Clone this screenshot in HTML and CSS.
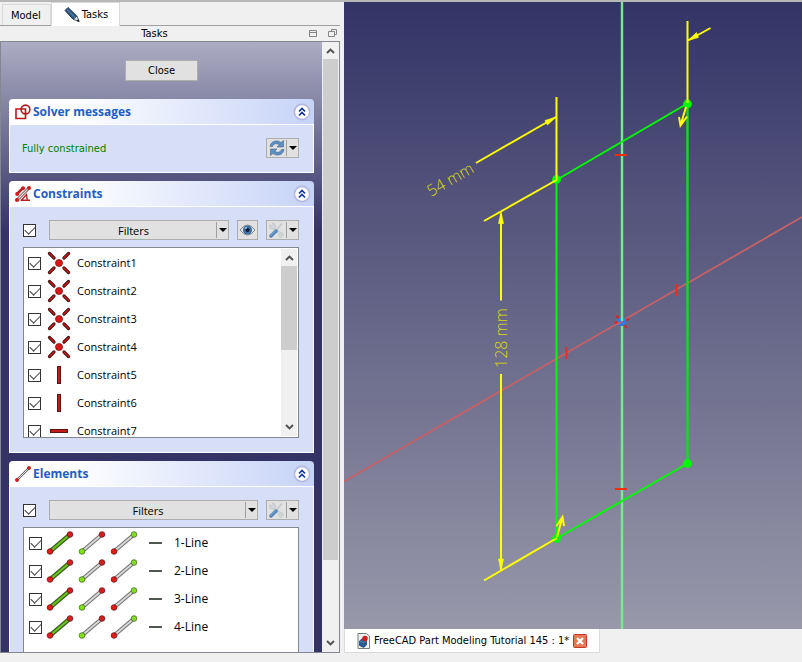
FILE: index.html
```html
<!DOCTYPE html>
<html lang="en">
<head>
<meta charset="utf-8">
<title>FreeCAD</title>
<link rel="stylesheet" href="styles.css">
</head>
<body>
<svg class="defs" aria-hidden="true">
  <defs>
    <symbol id="chevrons" viewBox="0 0 18 18">
      <circle cx="9" cy="9" r="7.6" fill="#fff" stroke="#b3b8dc" stroke-width="1.6"/>
      <path d="M6 8.5 9 5.500l3 3M6 12.500l3-3 3 3" fill="none" stroke="#0b36a8" stroke-width="1.700"/>
    </symbol>
    <symbol id="coincident" viewBox="0 0 24 24">
      <g stroke="#3a1010" stroke-width="3.200" stroke-linecap="round"><path d="M2.500 2.500 7 7M21.500 2.500 17 7M2.500 21.500 7 17M21.500 21.500 17 17"/></g>
      <g stroke="#c41a1a" stroke-width="1.600" stroke-linecap="round"><path d="M2.500 2.500 7 7M21.500 2.500 17 7M2.500 21.500 7 17M21.500 21.500 17 17"/></g>
      <circle cx="12" cy="12" r="3.500" fill="#d81818" stroke="#8d1010" stroke-width=".8"/>
    </symbol>
    <symbol id="vertical" viewBox="0 0 24 24">
      <rect x="10.500" y="3.500" width="3" height="17" fill="#c41a1a" stroke="#5b1414"/>
    </symbol>
    <symbol id="horizontal" viewBox="0 0 24 24">
      <rect x="3.500" y="10.500" width="17" height="3" fill="#c41a1a" stroke="#5b1414"/>
    </symbol>
    <symbol id="edge-line" viewBox="0 0 28 24">
      <path d="M4 20.500 24 3.500" stroke="#3c5a1c" stroke-width="4.400"/>
      <path d="M4 20.500 24 3.500" stroke="#69c41c" stroke-width="2.200"/>
      <circle cx="4" cy="20.500" r="2.800" fill="#e01b1b" stroke="#701515" stroke-width=".8"/>
      <circle cx="24" cy="3.500" r="2.800" fill="#e01b1b" stroke="#701515" stroke-width=".8"/>
    </symbol>
    <symbol id="start-line" viewBox="0 0 28 24">
      <path d="M4 20.500 24 3.500" stroke="#747474" stroke-width="4"/>
      <path d="M4 20.500 24 3.500" stroke="#d6d9d6" stroke-width="1.800"/>
      <circle cx="4" cy="20.500" r="2.800" fill="#84e01e" stroke="#42701a" stroke-width=".8"/>
      <circle cx="24" cy="3.500" r="2.800" fill="#e01b1b" stroke="#701515" stroke-width=".8"/>
    </symbol>
    <symbol id="end-line" viewBox="0 0 28 24">
      <path d="M4 20.500 24 3.500" stroke="#747474" stroke-width="4"/>
      <path d="M4 20.500 24 3.500" stroke="#d6d9d6" stroke-width="1.800"/>
      <circle cx="4" cy="20.500" r="2.800" fill="#e01b1b" stroke="#701515" stroke-width=".8"/>
      <circle cx="24" cy="3.500" r="2.800" fill="#84e01e" stroke="#42701a" stroke-width=".8"/>
    </symbol>
    <symbol id="tools" viewBox="0 0 16 16">
      <path d="M2 2.500 3.500 4 5 2.500 4 1l2.500.5L7.500 4l-.5 1.500 5 5 2.500.5 1 2.500-1.500-.5-1 1 .5 1.500-2.500-1-.5-2.500L5.500 7 3 7 1.500 5z" fill="#d3d6d8" stroke="#b9bdbf" stroke-width=".6"/>
      <path d="M14 1.500 9 7.500" stroke="#c3c8cc" stroke-width="1.600"/>
      <path d="M8 9 3 14" stroke="#5484b8" stroke-width="3.400" stroke-linecap="round"/>
      <path d="M7.500 8.700 2.800 13.500" stroke="#86add2" stroke-width="1"/>
    </symbol>
    <symbol id="up" viewBox="0 0 9 6"><path d="M1 5 4.500 1.500 8 5" fill="none" stroke="#505050" stroke-width="1.900"/></symbol>
    <symbol id="down" viewBox="0 0 9 6"><path d="M1 1 4.500 4.500 8 1" fill="none" stroke="#505050" stroke-width="1.900"/></symbol>
  </defs>
</svg>

<div class="app">
  <aside class="dock">
    <nav class="tabs" role="tablist">
      <button class="tab" role="tab" aria-selected="false">Model</button>
      <button class="tab tab-active" role="tab" aria-selected="true">
        <svg width="16" height="16" viewBox="0 0 16 16" aria-hidden="true"><path d="M1 3.500 4 .5l8.800 8.500-3.600 3.400z" fill="#30567d" stroke="#1e3854"/><path d="M3 2.500 11 10.500" stroke="#4a7aa8" stroke-width="1.200"/><path d="m13 9 2 5.400-5.700-2z" fill="#dfe3e6" stroke="#33414e" stroke-width=".8"/><path d="m15.600 15-3.200-.9 2.200-2.200z" fill="#182430"/></svg>
        Tasks
      </button>
    </nav>
    <header class="dock-title">
      <span class="dock-name">Tasks</span>
      <svg class="dock-icons" width="28" height="9" viewBox="0 0 28 9" aria-hidden="true"><g fill="none" stroke="#858585"><path d="M.5 1.500h7v6h-7zM.5 3.500h7M22.500 2.500v-2h5v5h-2M19.500 2.500h6v5h-6z"/></g></svg>
    </header>

    <div class="scroll">
      <main class="tasks">
        <button class="push close">Close</button>

        <section class="panel">
          <header class="panel-head">
            <svg width="16" height="16" viewBox="0 0 16 16" aria-hidden="true"><g fill="none" stroke="#b51a1f" stroke-width="1.600"><path d="M1 5h9.500v9.500H1z"/><circle cx="10.500" cy="5.500" r="4.400"/></g></svg>
            <h2>Solver messages</h2>
            <svg class="fold" width="18" height="18"><use href="#chevrons"/></svg>
          </header>
          <div class="panel-body solver">
            <span class="status">Fully constrained</span>
            <button class="push split" aria-label="Update">
              <svg width="18" height="18" viewBox="0 0 18 18"><g fill="#5e90c6" stroke="#40658c" stroke-width=".6"><path d="M2 7.500C2.500 3.500 6 1.200 10.500 2.200l2.500 1.300L15.500 1.500V8H9l2.300-2.300C8.500 4 5.500 4.500 4.500 7.500z"/><path d="M16 10.500c-.5 4-4 6.300-8.500 5.300L5 14.500 2.500 16.500V10H9l-2.300 2.300c2.800 1.700 5.800 1.200 6.800-1.800z"/></g></svg>
              <span class="drop"></span>
            </button>
          </div>
        </section>

        <section class="panel">
          <header class="panel-head">
            <svg width="16" height="16" viewBox="0 0 16 16" aria-hidden="true"><path d="M2 8 8 2" stroke="#b52020" stroke-width="2.600"/><path d="M2 14 14 2" stroke="#6e3a3a" stroke-width="2.800"/><path d="M2 14 14 2" stroke="#ddd" stroke-width="1.200"/><path d="m6.500 14 5-5.500.8 5.500M5.500 14.300h9.500" fill="none" stroke="#b52020" stroke-width="1.400"/><g fill="#d31a1a"><circle cx="2.200" cy="8" r="2"/><circle cx="8" cy="2.200" r="2"/><circle cx="2" cy="14" r="2"/><circle cx="14" cy="2" r="2"/></g></svg>
            <h2>Constraints</h2>
            <svg class="fold" width="18" height="18"><use href="#chevrons"/></svg>
          </header>
          <div class="panel-body">
            <div class="toolbar">
              <input type="checkbox" checked aria-label="Show constraints">
              <button class="push split filters"><span class="label">Filters</span><span class="drop"></span></button>
              <button class="push eye" aria-label="Show or hide">
                <svg width="17" height="14" viewBox="0 0 17 14"><path d="M1 7q7.500-10 15 0-7.500 10-15 0z" fill="#e4e7e8" stroke="#808484"/><circle cx="8.500" cy="7" r="4.600" fill="#3f70a5"/><circle cx="8.500" cy="7" r="2" fill="#0c1829"/><circle cx="7" cy="5" r="1" fill="#a8c7e6"/></svg>
              </button>
              <button class="push split" aria-label="Settings"><svg width="16" height="16"><use href="#tools"/></svg><span class="drop"></span></button>
            </div>
            <div class="list constraint-list">
              <ul>
                <li><label><input type="checkbox" checked><svg width="24" height="24"><use href="#coincident"/></svg>Constraint1</label></li>
                <li><label><input type="checkbox" checked><svg width="24" height="24"><use href="#coincident"/></svg>Constraint2</label></li>
                <li><label><input type="checkbox" checked><svg width="24" height="24"><use href="#coincident"/></svg>Constraint3</label></li>
                <li><label><input type="checkbox" checked><svg width="24" height="24"><use href="#coincident"/></svg>Constraint4</label></li>
                <li><label><input type="checkbox" checked><svg width="24" height="24"><use href="#vertical"/></svg>Constraint5</label></li>
                <li><label><input type="checkbox" checked><svg width="24" height="24"><use href="#vertical"/></svg>Constraint6</label></li>
                <li><label><input type="checkbox" checked><svg width="24" height="24"><use href="#horizontal"/></svg>Constraint7</label></li>
              </ul>
              <div class="bar" aria-hidden="true"><svg width="9" height="6"><use href="#up"/></svg><span class="track"><span class="thumb half"></span></span><svg width="9" height="6"><use href="#down"/></svg></div>
            </div>
          </div>
        </section>

        <section class="panel">
          <header class="panel-head">
            <svg width="16" height="16" viewBox="0 0 16 16" aria-hidden="true"><path d="M2 14 14 2" stroke="#666" stroke-width="2.400"/><path d="M2 14 14 2" stroke="#ddd" stroke-width="1"/><g fill="#dc1b1b" stroke="#8f1818" stroke-width=".5"><circle cx="2" cy="14" r="1.700"/><circle cx="14" cy="2" r="1.700"/></g></svg>
            <h2>Elements</h2>
            <svg class="fold" width="18" height="18"><use href="#chevrons"/></svg>
          </header>
          <div class="panel-body">
            <div class="toolbar">
              <input type="checkbox" checked aria-label="Show elements">
              <button class="push split filters"><span class="label">Filters</span><span class="drop"></span></button>
              <button class="push split" aria-label="Settings"><svg width="16" height="16"><use href="#tools"/></svg><span class="drop"></span></button>
            </div>
            <div class="list element-list">
              <ul>
                <li><label><input type="checkbox" checked><span class="kinds"><svg width="28" height="24"><use href="#edge-line"/></svg><svg width="28" height="24"><use href="#start-line"/></svg><svg width="28" height="24"><use href="#end-line"/></svg></span><span class="dash"></span>1-Line</label></li>
                <li><label><input type="checkbox" checked><span class="kinds"><svg width="28" height="24"><use href="#edge-line"/></svg><svg width="28" height="24"><use href="#start-line"/></svg><svg width="28" height="24"><use href="#end-line"/></svg></span><span class="dash"></span>2-Line</label></li>
                <li><label><input type="checkbox" checked><span class="kinds"><svg width="28" height="24"><use href="#edge-line"/></svg><svg width="28" height="24"><use href="#start-line"/></svg><svg width="28" height="24"><use href="#end-line"/></svg></span><span class="dash"></span>3-Line</label></li>
                <li><label><input type="checkbox" checked><span class="kinds"><svg width="28" height="24"><use href="#edge-line"/></svg><svg width="28" height="24"><use href="#start-line"/></svg><svg width="28" height="24"><use href="#end-line"/></svg></span><span class="dash"></span>4-Line</label></li>
              </ul>
            </div>
          </div>
        </section>
      </main>
      <div class="bar outer-bar" aria-hidden="true"><svg width="9" height="6"><use href="#up"/></svg><span class="track"><span class="thumb most"></span></span><svg width="9" height="6"><use href="#down"/></svg></div>
    </div>
  </aside>

  <section class="document">
    <div class="view">
      <svg class="sketch" viewBox="344 2 458 627" preserveAspectRatio="xMidYMid slice" role="img" aria-label="Sketch of a constrained rectangle">
        <path d="M344 481.500 802 217" stroke="#c66066" stroke-width="1.800"/>
        <path d="M687.500 104v360" stroke="#10dc20" stroke-width="2.400"/>
        <circle cx="621.500" cy="321.500" r="4.500" fill="#257cf5"/>
        <path d="m616 316 3 2M614.500 323l3-1M626 320l3-1M624.500 325l2 3" stroke="#d02c24" stroke-width="2.200"/>
        <path d="M617 324.500 623 321" stroke="#c66066" stroke-width="1.500"/>
        <path d="M622 2v319M622 326v303" stroke="#72ee88" stroke-width="2.400"/>
        <path d="M556.500 538V180l131-76.500M556.500 538.500 687.500 463.500" fill="none" stroke="#00fc00" stroke-width="2"/>
        <g fill="#00fc00"><circle cx="556.500" cy="179.500" r="4.400"/><circle cx="687.500" cy="104" r="4.400"/><circle cx="687.500" cy="463.500" r="4.400"/><circle cx="556.500" cy="538.500" r="4.400"/></g>
        <g fill="none" stroke="#ffff00" stroke-width="2">
          <path d="M556.500 97v83L484 221M476 163l80-46M501 214v86.500M501 374v196M484 580.500l73-42.500M687.500 21v82M688 40.500 710.500 28"/>
          <path d="m686 107-5.500 18.500M679 117l1.500 8.500 6.500-9M557 537l5.500-20M556.500 526l6-9 1.500 9"/>
        </g>
        <g fill="#ffff00" stroke="#ffff00" stroke-width=".6"><path d="m556 117-11 3.500 2.500 4.500zM501 211.500l-2.500 12h5zM501 571l-2.500-12h5zM688 40.500l8.500-8 2 5z"/></g>
        <path d="M615 155h12M615 489h12M676.500 284v12M566.500 347v12" stroke="#f52a10" stroke-width="2"/>
        <text class="dimension" transform="translate(431 197) rotate(-30)">54 mm</text>
        <text class="dimension" transform="translate(507 368) rotate(-90)">128 mm</text>
      </svg>
    </div>
    <div class="doc-tab">
      <svg width="13" height="16" viewBox="0 0 13 16" aria-hidden="true"><path d="M1 .5h8.500L12.500 3v12.500H1z" fill="#f0f1f1" stroke="#777c7c"/><path d="m2.500 8 3-2.500 4 1.500v5l-3 2.500-4-2z" fill="#2b5b92" stroke="#173659" stroke-width=".7"/><path d="m2.500 8 4 1.500L9.500 7" fill="none" stroke="#88a8c8" stroke-width=".6"/><circle cx="8" cy="5.500" r="2.700" fill="#d7191c"/></svg>
      <span>FreeCAD Part Modeling Tutorial 145 : 1*</span>
      <button class="doc-close" aria-label="Close document"><svg width="14" height="14" viewBox="0 0 14 14"><rect x=".5" y=".5" width="13" height="13" rx="1" fill="#e27855" stroke="#c9381e"/><path d="m4 4 6 6m0-6-6 6" stroke="#fff" stroke-width="2.400"/></svg></button>
    </div>
  </section>
</div>
</body>
</html>
```
FILE: styles.css
```css
* { box-sizing: border-box; }

body {
  margin: 0;
  background: #f0f0f0;
  color: #000;
  font: 11px/16px "DejaVu Sans Condensed", "DejaVu Sans", sans-serif;
}

.defs { position: absolute; width: 0; height: 0; }
svg { display: block; flex: none; }
button { font: inherit; color: inherit; margin: 0; padding: 0; }
ul { list-style: none; margin: 0; padding: 0; }

.app {
  display: flex;
  gap: 4px;
  height: 100vh;
  padding-bottom: 9px;
  border-top: 2px solid #b7b9b7;
}

.dock {
  display: flex;
  flex-direction: column;
  flex: 0 0 340px;
  min-width: 0;
}

.tabs {
  display: flex;
  align-items: flex-end;
  height: 24px;
  padding-left: 2px;
  border-bottom: 1px solid #a0a0a0;
}

.tab {
  display: flex;
  align-items: center;
  gap: 2px;
  height: 21px;
  padding: 2px 9px 0 8px;
  border: 1px solid #d9d9d9;
  border-bottom: 0;
  background: #f0f0f0;
}

.tab-active {
  height: 24px;
  padding: 1px 11px 0 12px;
  background: #fff;
  margin-bottom: -1px;
}

.dock-title {
  display: flex;
  align-items: center;
  height: 15px;
  padding-right: 3px;
}

.dock-name { flex: 1; text-align: center; }

.scroll {
  display: flex;
  flex: 1;
  min-height: 0;
  border: 1px solid #828790;
  background: #f0f0f0;
}

.tasks {
  display: flex;
  flex-direction: column;
  gap: 8px;
  flex: 1;
  min-width: 0;
  overflow: hidden;
  padding: 18px 8px 0;
  background: #333366 linear-gradient(#acacc3, #333366) 0 0 / 100% 190px no-repeat;
}

.push {
  border: 1px solid #adadad;
  background: #e1e1e1;
}

.close {
  align-self: center;
  flex: none;
  width: 73px;
  height: 21px;
  margin-bottom: 10px;
  padding-top: 1px;
}

.panel { flex: none; }

.panel-head {
  display: flex;
  align-items: center;
  gap: 2px;
  height: 25px;
  padding: 0 3px 0 6px;
  border-radius: 4px 4px 0 0;
  background: linear-gradient(90deg, #fff, #fff 20%, #c6d3f7);
}

.panel-head h2 {
  flex: 1;
  margin: 0;
  color: #215dc6;
  font: bold 12px/16px "Open Sans", "Noto Sans", sans-serif;
}

.panel-body {
  padding: 13px 14px 14px 13px;
  border: 1px solid #fff;
  background: #d6dff7;
}

.solver {
  display: flex;
  align-items: center;
  justify-content: space-between;
  padding-left: 12px;
}

.status {
  padding-top: 2px;
  color: #008000;
}

.toolbar {
  display: flex;
  align-items: center;
  gap: 8px;
}

input[type="checkbox"] {
  appearance: none;
  display: grid;
  place-items: center;
  flex: none;
  width: 13px;
  height: 13px;
  margin: 0;
  border: 1px solid #333;
  background: #fff;
}

.toolbar input[type="checkbox"] { margin-right: 5px; }

input[type="checkbox"]:checked::before {
  content: "";
  width: 9px;
  height: 5px;
  margin-top: -3px;
  border: solid #444;
  border-width: 0 0 1px 1px;
  transform: rotate(-45deg);
}

.split {
  display: flex;
  align-items: center;
  justify-content: space-between;
  flex: none;
  width: 33px;
  height: 20px;
  padding-left: 1px;
}

.filters { flex: 1; }

.label {
  flex: 1;
  padding-top: 2px;
  font: 11px/16px "Open Sans", "Noto Sans", sans-serif;
}

.drop {
  display: grid;
  place-items: center;
  width: 12px;
  height: 16px;
  border-left: 1px solid #a0a0a0;
}

.drop::before {
  content: "";
  border: 4px solid transparent;
  border-top-color: #000;
  border-bottom: 0;
}

.eye {
  display: grid;
  place-items: center;
  width: 21px;
  height: 20px;
}

.list {
  display: flex;
  margin-top: 7px;
  overflow: hidden;
  padding: 1px;
  border: 1px solid #828790;
  background: #fff;
  font: 12px/16px "Open Sans", "Noto Sans", sans-serif;
}

.list ul { flex: 1; }

.list label {
  display: flex;
  align-items: center;
  height: 28px;
  padding-left: 3px;
}

.constraint-list { height: 191px; font-size: 11px; }
.constraint-list label { gap: 6px; }
.element-list { height: 180px; }
.element-list label { padding-left: 4px; }

.kinds { display: flex; gap: 4px; margin-left: 4px; }
.dash { width: 13px; height: 2px; margin: 0 12px 0 11px; background: #505650; }

.bar {
  display: flex;
  flex-direction: column;
  align-items: center;
  flex: none;
  width: 16px;
  padding: 6px 0;
  background: #f0f0f0;
}

.outer-bar {
  width: 17px;
  padding-right: 1px;
  border-left: 1px solid #f0f0f0;
}

.track { flex: 1; width: 100%; padding: 5px 0; }
.thumb { display: block; width: 100%; background: #cdcdcd; }
.half { height: 55%; }
.most { height: 87%; }

.document {
  display: flex;
  flex-direction: column;
  flex: 1;
  min-width: 0;
}

.view {
  flex: 1;
  min-height: 0;
  background: linear-gradient(#333366, #9898aa);
}

.sketch { width: 100%; height: 100%; }

.dimension {
  fill: #dcdc08;
  font: 300 16px "Open Sans", "Noto Sans", sans-serif;
}

.doc-tab {
  display: flex;
  align-items: center;
  align-self: flex-start;
  gap: 4px;
  height: 24px;
  padding: 0 12px;
  border: 1px solid #d9d9d9;
  border-top: 0;
  background: #fff;
}

.doc-close { border: 0; background: none; }
```
